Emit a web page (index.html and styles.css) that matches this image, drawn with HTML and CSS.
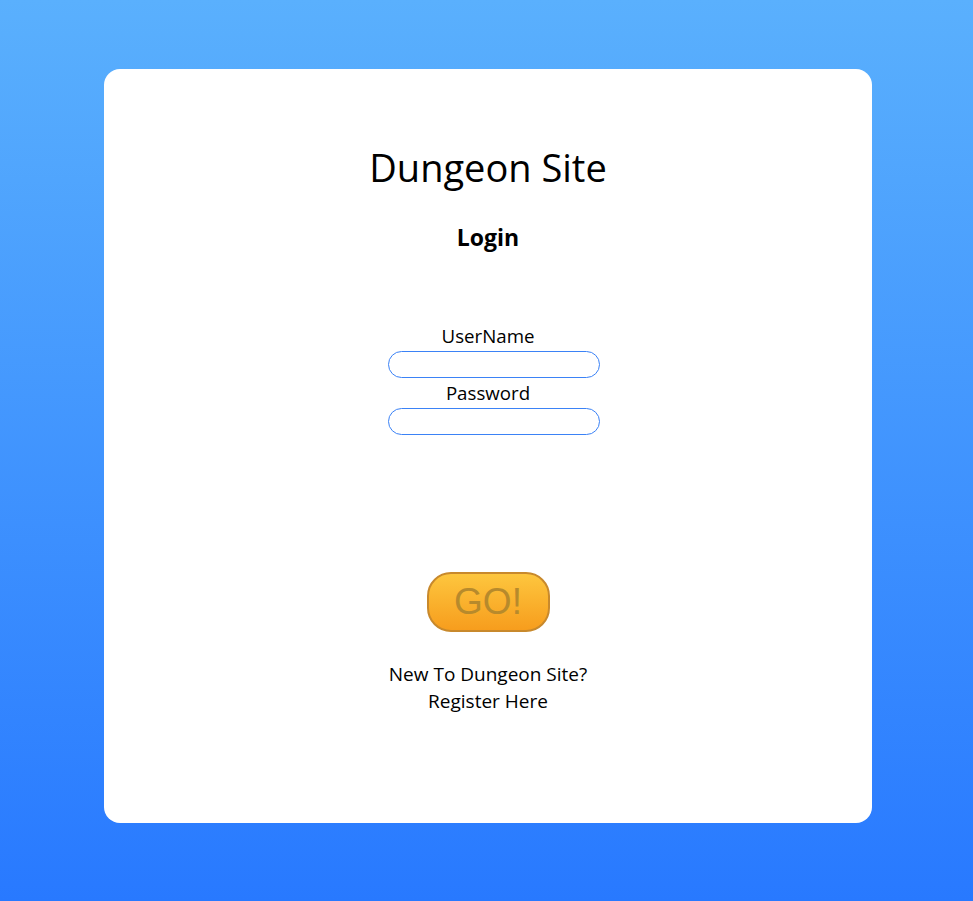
FILE: index.html
```html
<!DOCTYPE html>
<html>
<head>
<meta charset="utf-8">
<link rel="stylesheet" href="styles.css">
</head>
<body>
<div class="page">
  <div class="card">
    <h1 class="title">Dungeon Site</h1>
    <h2 class="subtitle">Login</h2>
    <form class="form">
      <label class="label" for="u">UserName</label>
      <input class="field" id="u" type="text">
      <label class="label" for="p">Password</label>
      <input class="field" id="p" type="password">
      <button class="go" type="button">GO!</button>
    </form>
    <div class="register">
      <div>New To Dungeon Site?</div>
      <div>Register Here</div>
    </div>
  </div>
</div>
</body>
</html>
```

FILE: styles.css
```css
html, body {
  margin: 0;
  padding: 0;
}
body {
  font-family: "Open Sans", "Noto Sans", sans-serif;
  color: #000;
}
.page {
  height: 901px;
  box-sizing: border-box;
  padding: 69px 0 0 104px;
  background: linear-gradient(to bottom, #5ab0fd, #2879ff);
}
.card {
  width: 768px;
  height: 754px;
  background: #fff;
  border-radius: 16px;
  display: flex;
  flex-direction: column;
  align-items: center;
  padding-top: 74px;
  box-sizing: border-box;
}
.title {
  margin: 0;
  font-size: 38px;
  font-weight: 400;
  line-height: 48px;
}
.subtitle {
  margin: 31px 0 0;
  font-size: 23px;
  font-weight: 700;
  line-height: 30px;
}
.form {
  margin-top: 69px;
  display: flex;
  flex-direction: column;
  align-items: center;
}
.label {
  font-size: 18.7px;
  line-height: 24px;
  margin: 3px 0 3px;
}
.field {
  width: 212px;
  height: 27px;
  box-sizing: border-box;
  border: 1px solid #3b82f6;
  border-radius: 14px;
  margin: 0 0 0 12px;
  padding: 0 10px;
  outline: none;
}
.go {
  margin-top: 137px;
  width: 123px;
  height: 60px;
  border-radius: 24px;
  border: 2px solid #c8892c;
  background: linear-gradient(to bottom, #fdc63e, #f79d1d);
  font-family: "Liberation Sans", Arial, sans-serif;
  font-size: 37px;
  color: #b78a2c;
  padding: 0;
}
.register {
  margin-top: 29px;
  text-align: center;
  font-size: 19px;
  line-height: 27px;
}
```
